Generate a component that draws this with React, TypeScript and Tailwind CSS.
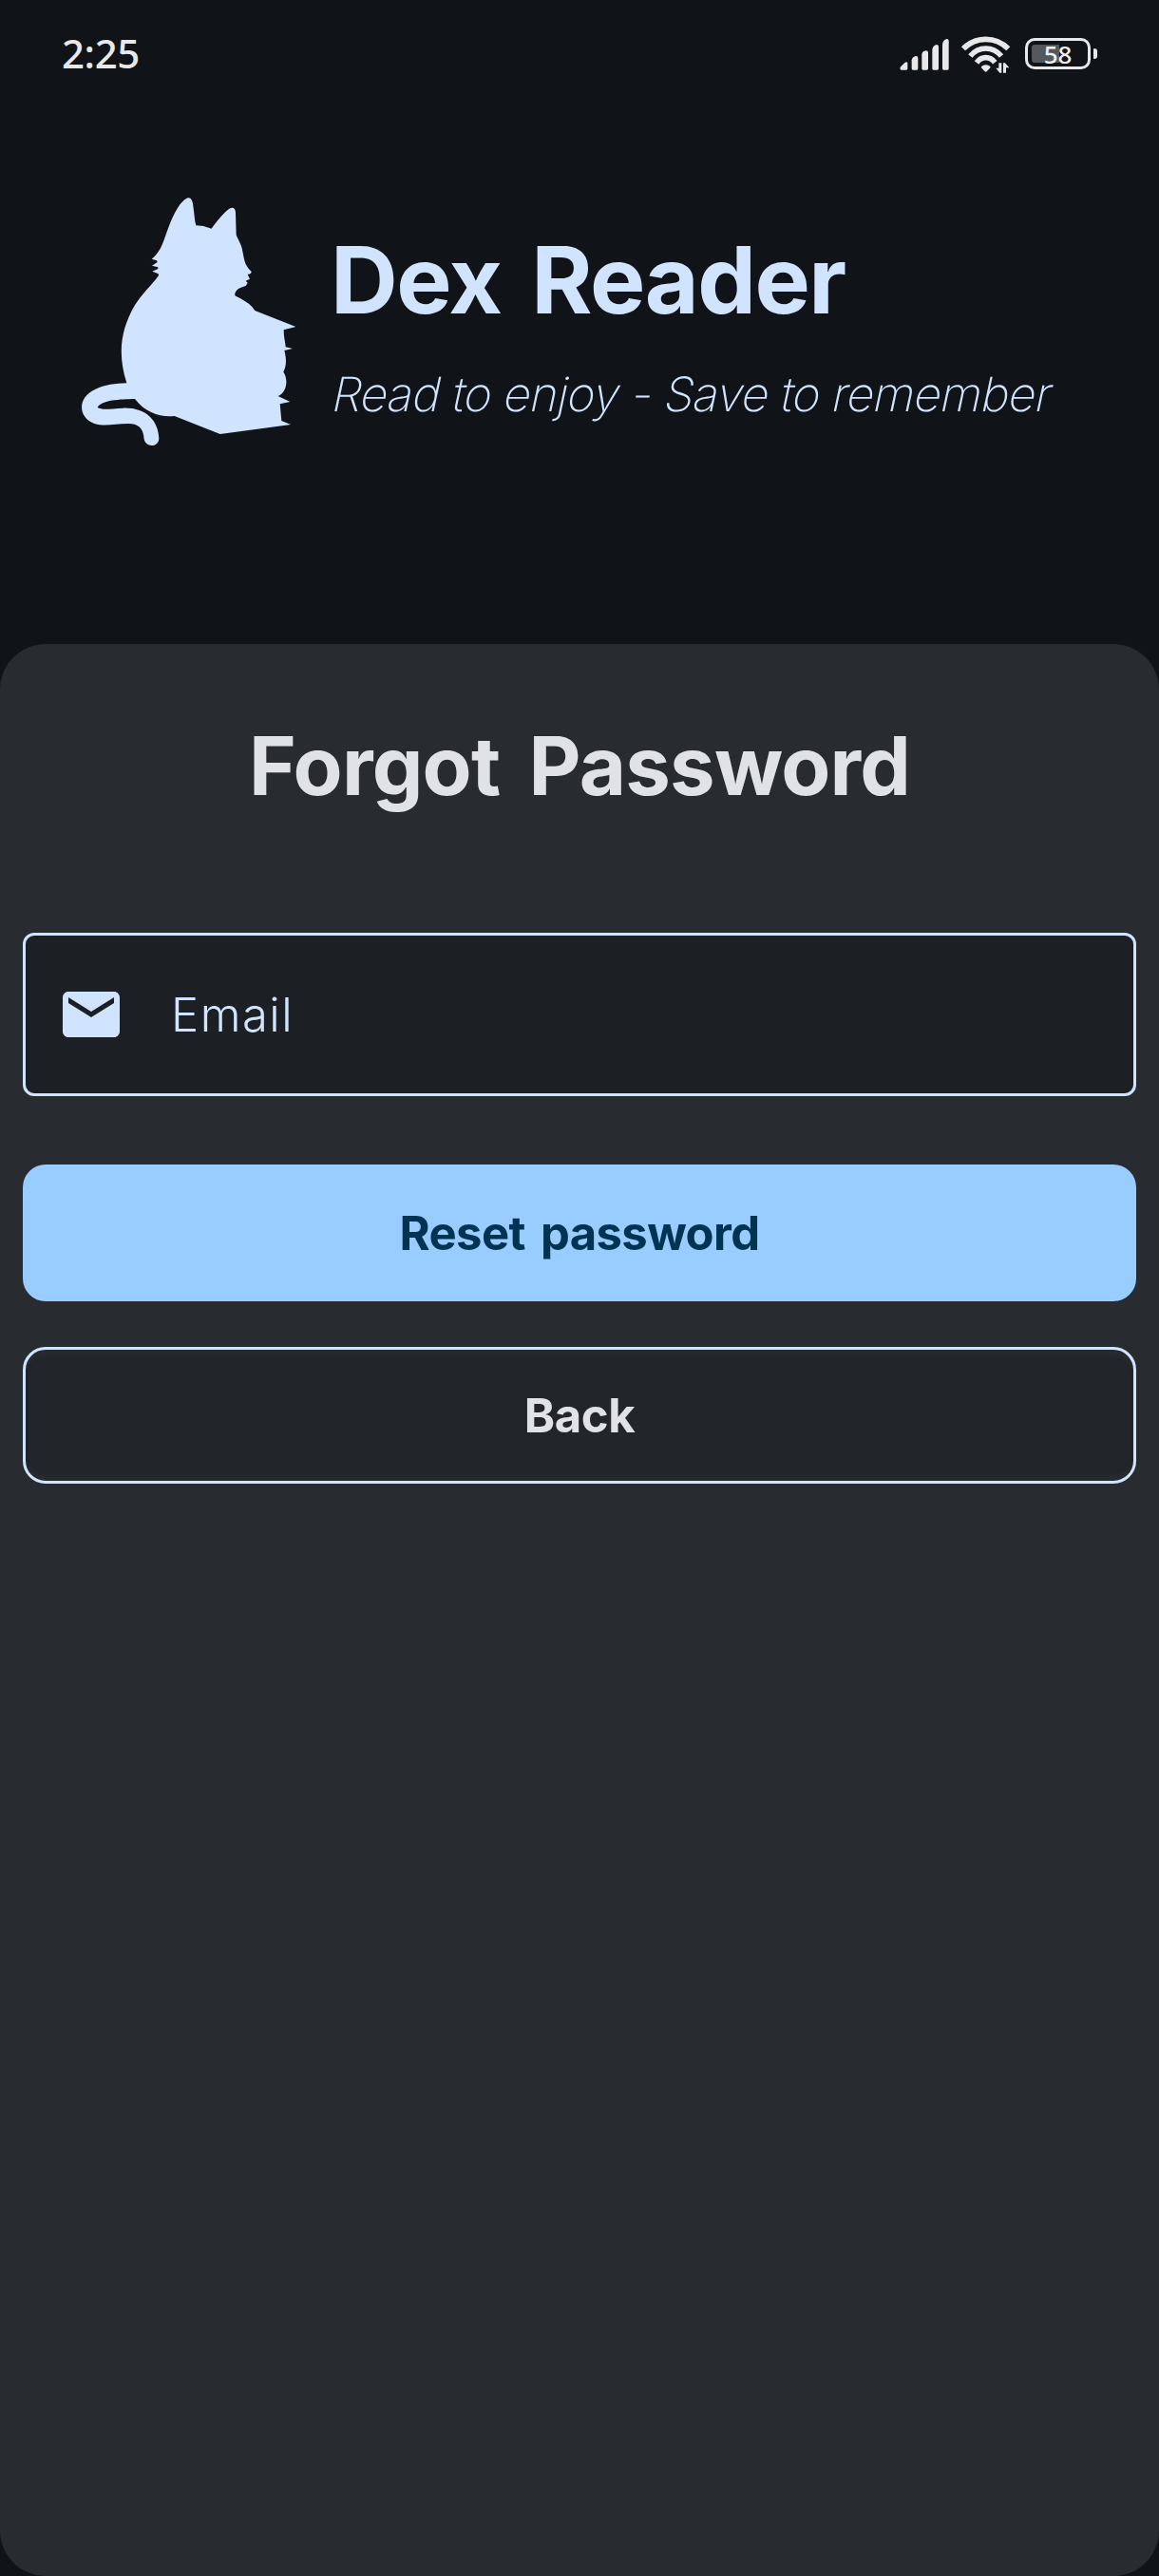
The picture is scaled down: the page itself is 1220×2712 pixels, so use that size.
import { MdEmail } from "react-icons/md";

function SignalIcon() {
  return (
    <svg className="h-[34px] w-[52px]" viewBox="0 0 156 102" fill="#e8e8ea" aria-hidden="true">
      <path d="M2 92 L16 78 Q25 72 25 80 V97 Q25 101 21 101 H6 Q0 101 2 92Z" />
      <path d="M38 70 Q40 60 50 57 Q58 56 58 64 V96 Q58 101 54 101 H42 Q38 101 38 97Z" />
      <path d="M70 52 Q71 42 83 40 Q90 40 90 46 V96 Q90 101 86 101 H74 Q70 101 70 97Z" />
      <path d="M103 36 Q105 24 116 21 Q123 21 123 27 V96 Q123 101 119 101 H107 Q103 101 103 97Z" />
      <path d="M135 20 Q137 6 148 3 Q155 2 155 9 V96 Q155 101 151 101 H139 Q135 101 135 97Z" />
    </svg>
  );
}

function WifiIcon() {
  return (
    <svg className="h-[40px] w-[52px]" viewBox="0 0 156 120" fill="none" stroke="#e8e8ea" strokeWidth="17" aria-hidden="true">
      <path d="M6 43 Q36 13 77 13 Q118 13 148 43" />
      <path d="M28 66 Q48 42 77 42 Q106 42 126 66" />
      <path d="M48 87 Q60 71 77 71 Q94 71 106 86" />
      <path d="M77 94 Q89 94 92 102 L80 115 Q77 117 74 115 L62 102 Q66 94 77 94Z" fill="#e8e8ea" stroke="none" />
      <path d="M109 104 H118 V88 H127 V119 H121Z M132 88 H138 L151 103 H141 V119 H132Z" fill="#e8e8ea" stroke="none" />
    </svg>
  );
}

function Battery() {
  return (
    <div className="flex items-center gap-[3px]">
      <div className="flex h-[33px] w-[69px] items-center rounded-[10px] border-[3px] border-[#e8e8ea] p-[4px]">
        <div className="flex h-full w-full items-center justify-center rounded-[3px] bg-linear-to-r from-[#55575a] from-52% to-transparent to-52%">
          <span className="font-['Noto_Sans',sans-serif] text-[26px] leading-none font-medium text-[#f0f0f2]">58</span>
        </div>
      </div>
      <div className="h-[11px] w-[4px] rounded-r-[3px] rounded-l-[1px] bg-[#e8e8ea]" />
    </div>
  );
}

function CatLogo() {
  return (
    <svg className="h-[290px] w-[260px] shrink-0" viewBox="0 0 780 870" fill="#d0e4ff" aria-hidden="true">
      <path d="M190 640 C160 545 172 470 215 395 C240 355 270 330 291 300 L290 295 L271 287 L289 279 L289 274 L270 269 L287 258 L285 253 L269 248 C300 224 306 190 324 143 C340 100 360 66 380 56 C392 52 398 62 400 80 C404 105 404 125 409 142 L432 144 L458 152 C470 134 494 104 514 89 C526 82 534 88 534 102 L536 172 C541 186 550 198 554 214 C562 250 560 265 584 288 L582 294 L572 297 L579 311 L566 317 L572 323 L566 333 C546 339 530 347 532 364 C556 376 580 387 595 411 L724 462 L686 472 C686 495 691 510 692 526 L714 531 L688 537 C695 565 695 585 685 605 C700 625 698 668 668 681 L706 699 L674 706 L679 759 L708 771 L485 801 L341 744 C300 749 250 735 216 690 C170 691 110 693 98 717 C110 726 140 721 178 719 C250 716 290 758 292 815 C290 844 250 844 245 817 C243 780 225 768 195 768 C150 769 120 778 88 768 C35 748 34 685 90 660 C120 645 155 641 190 640Z" />
    </svg>
  );
}

export default function App() {
  return (
    <div className="flex h-[2712px] w-[1220px] flex-col bg-[#101418] font-['Inter',sans-serif]">
      <header className="flex h-[116px] items-start justify-between px-[65px]">
        <span className="pt-[35px] font-['Noto_Sans',sans-serif] text-[42px] leading-none font-medium tracking-[-0.4px] text-[#e8e8ea]">2:25</span>
        <div className="flex pt-[37px]">
          <div className="pt-[3px] pr-[13px]"><SignalIcon /></div>
          <div className="pr-[15px]"><WifiIcon /></div>
          <div className="pt-[3px]"><Battery /></div>
        </div>
      </header>

      <section className="flex h-[562px] items-start pt-[74px] pl-[70px]">
        <CatLogo />
        <div className="flex flex-col gap-[46px] pt-[56px] pl-[18px] whitespace-nowrap text-[#d0e4ff]">
          <h1 className="text-[98px] leading-none font-bold tracking-[-1.5px] [word-spacing:10px]">Dex Reader</h1>
          <p className="-ml-px origin-[0_86%] -skew-x-12 text-[50px] leading-none font-extralight tracking-[-0.8px]">
            Read to enjoy - Save to remember
          </p>
        </div>
      </section>

      <main className="flex flex-1 flex-col rounded-[48px] bg-[#282b2f] px-6 pt-[86px]">
        <h2 className="text-center text-[85px] leading-none font-bold tracking-[-0.8px] text-[#e0e2e8] [word-spacing:11px]">
          Forgot Password
        </h2>
        <div className="mt-[133px] flex h-[172px] items-center rounded-[12px] border-[3px] border-[#d0e4ff] bg-[#1c2024] pl-[33px] text-[#d0e4ff]">
          <MdEmail className="size-[72px]" />
          <span className="pl-[48px] text-[49px] leading-none font-light tracking-[1.5px]">Email</span>
        </div>
        <button className="mt-[72px] h-[144px] rounded-[24px] bg-[#99cdff] text-[49px] leading-none font-bold tracking-[-0.6px] text-[#003352] [word-spacing:5px]">
          Reset password
        </button>
        <button className="mt-12 h-[144px] rounded-[24px] border-[3px] border-[#d0e4ff] bg-[#222529] text-[49px] leading-none font-bold tracking-[-0.4px] text-[#e0e2e8] shadow-[inset_0_9px_5px_-3px_#282b2f,inset_0_-9px_5px_-3px_#282b2f]">
          Back
        </button>
      </main>
    </div>
  );
}
